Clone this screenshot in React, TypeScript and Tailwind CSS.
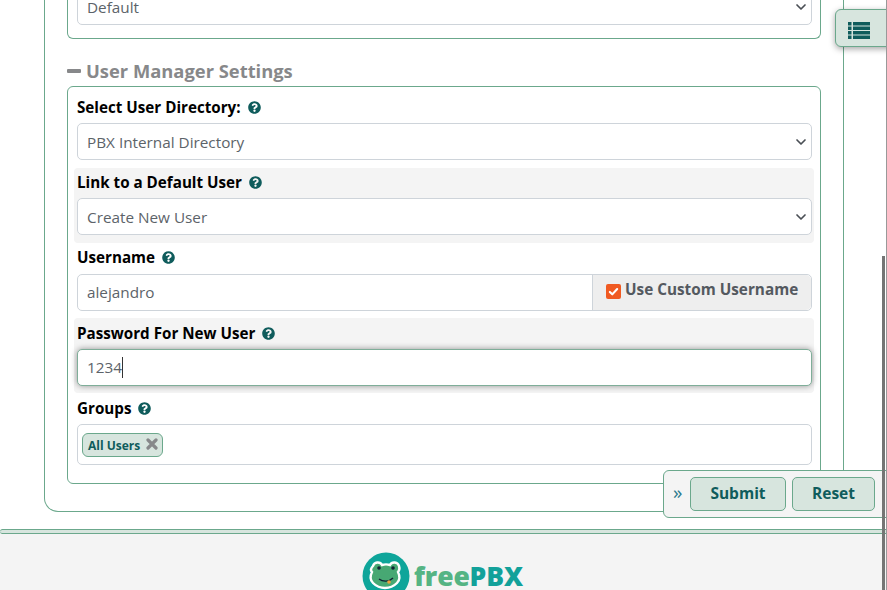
import React from "react";
import { FaQuestionCircle } from "react-icons/fa";

function Help() {
  return <FaQuestionCircle className="ml-[7px] h-[13px] w-[13px] shrink-0 text-[#0f5c5c]" />;
}

function Chevron() {
  return (
    <svg viewBox="0 0 12 12" className="h-[12px] w-[12px]" fill="none" stroke="#4a4f55" strokeWidth="1.7" strokeLinecap="round" strokeLinejoin="round">
      <path d="M2 4l4 4 4-4" />
    </svg>
  );
}

function Label({ text }: { text: string }) {
  return (
    <div className="flex h-[24px] items-center text-[15.2px] font-bold leading-[24px] text-black">
      <span>{text}</span>
      <Help />
    </div>
  );
}

function SelectBox({ value, className = "" }: { value: string; className?: string }) {
  return (
    <div className={`flex h-[37px] items-center justify-between rounded-[5px] border border-[#ced4da] bg-white pl-[9px] pr-[4px] text-[15.3px] text-[#5c6369] ${className}`}>
      <span className="pt-[2px]">{value}</span>
      <Chevron />
    </div>
  );
}

export default function App() {
  return (
    <div className="relative h-[590px] w-[887px] overflow-hidden bg-white font-['Open_Sans',sans-serif]">
      <div className="ml-[44px] mt-[-40px] h-[552px] w-[800px] rounded-b-[14px] border-x border-b border-[#6ba88c] pl-[22px]">
        <div className="h-[79px] w-[754px] rounded-b-[6px] border-x border-b border-[#6ba88c] px-[9px] pt-[28px]">
          <SelectBox value="Default" className="w-[735px]" />
        </div>

        <div className="mt-[19px] flex h-[28px] items-center pb-[2px] text-[18.35px] font-bold text-[#87888a]">
          <span className="mr-[5px] h-[4px] w-[14px] rounded-[1px] bg-[#87888a]" />
          <span>User Manager Settings</span>
        </div>

        <div className="h-[398px] w-[754px] rounded-[6px] border border-[#6ba88c] px-[6px] pt-[8px]">
          <div className="pl-[3px] pr-[2px]">
            <Label text="Select User Directory:" />
            <SelectBox value="PBX Internal Directory" className="mt-[4px]" />
          </div>

          <div className="mt-[8px] h-[75px] rounded-[4px] bg-[#f4f4f4] pl-[3px] pr-[2px] pt-[2px]">
            <Label text="Link to a Default User" />
            <SelectBox value="Create New User" className="mt-[4px]" />
          </div>

          <div className="h-[75px] pl-[3px] pr-[2px] pt-[2px]">
            <Label text="Username" />
            <div className="mt-[5px] flex h-[37px] rounded-[5px] border border-[#ced4da] text-[15.3px]">
              <div className="flex flex-1 items-center pl-[9px] text-[#5c6369]">alejandro</div>
              <div className="flex w-[219px] items-center rounded-r-[5px] border-l border-[#ced4da] bg-[#eeeeee] pl-[13px] text-[15.3px] font-bold text-[#54595f]">
                <span className="mr-[4px] -mt-[3px] flex h-[15px] w-[15px] items-center justify-center rounded-[2px] bg-[#f05a22]">
                  <svg viewBox="0 0 16 16" className="h-[13px] w-[13px]" fill="none" stroke="white" strokeWidth="2.6" strokeLinecap="round" strokeLinejoin="round">
                    <path d="M3.5 8.5l3 3 6-6.5" />
                  </svg>
                </span>
                <span className="-mt-[6px]">Use Custom Username</span>
              </div>
            </div>
          </div>

          <div className="h-[75px] rounded-[4px] bg-[#f4f4f4] pl-[3px] pr-[2px] pt-[3px]">
            <Label text="Password For New User" />
            <div className="mt-[4px] flex h-[37px] items-center rounded-[5px] border border-[#7fae99] bg-white pl-[9px] text-[15.3px] text-[#5c6369] shadow-[0_0_6px_rgba(0,0,0,0.4)]">
              <span>1234</span>
              <span className="h-[21px] w-px bg-[#333]" />
            </div>
          </div>

          <div className="pl-[3px] pr-[2px] pt-[3px]">
            <Label text="Groups" />
            <div className="mt-[4px] flex h-[41px] items-center rounded-[5px] border border-[#ced4da] bg-white pl-[4px]">
              <span className="flex h-[24px] w-[81px] items-center rounded-[6px] border border-[#6ba88c] bg-[#d7e5de] pl-[5px] pt-[2px] text-[12px] font-bold text-[#0f5c5c]">
                All Users
                <svg viewBox="0 0 12 12" className="-mt-[3px] ml-[6px] h-[12px] w-[12px]" stroke="#87888a" strokeWidth="3.2" strokeLinecap="round">
                  <path d="M2 2l8 8M10 2l-8 8" />
                </svg>
              </span>
            </div>
          </div>
        </div>
      </div>

      <div className="mt-[17px] h-[5px] rounded-l-[3px] border-y border-[#6ba88c] bg-[#d7e5de]" />
      <div className="flex h-[57px] justify-center bg-[#f4f4f4] pl-[-2px] pr-[2px] pt-[18px]">
        <div className="flex items-start">
          <svg viewBox="0 0 48 48" className="h-[48px] w-[48px] shrink-0">
            <circle cx="24" cy="24" r="23.5" fill="#0ea59a" />
            <path d="M11 14c1-4 7-5 9-1 3-1 5-1 8 0 2-4 8-3 9 1 1 3 0 5-1 6 2 4 2 8-1 11-3 3-7 5-12 5s-9-2-12-5c-3-3-3-7-1-11-1-1-2-3 1-6z" fill="#47a873" stroke="white" strokeWidth="2.4" />
            <circle cx="17" cy="16" r="1.8" fill="#123" />
            <circle cx="31" cy="16" r="1.8" fill="#123" />
            <path d="M17 27c4 3 10 3 14-1" fill="none" stroke="#123" strokeWidth="1.4" />
            <circle cx="27" cy="30" r="1.8" fill="#f0a03c" />
          </svg>
          <span className="ml-[4px] mt-[6px] text-[26.5px] font-extrabold leading-[36px] tracking-[-0.15px]">
            <span className="text-[#55b484]">free</span>
            <span className="text-[#12a19a]">PBX</span>
          </span>
        </div>
      </div>

      <div className="absolute left-[835px] top-[9px] flex h-[38px] w-[60px] items-start rounded-l-[6px] border border-[#6ba88c] bg-[#d7e5de] pl-[12px] pt-[12px] shadow-[0_2px_6px_rgba(0,0,0,0.35)]">
        <svg viewBox="0 0 22 17" className="h-[17px] w-[22px]" fill="#0f5c5c">
          <rect x="0" y="0" width="3.5" height="3.5" />
          <rect x="5" y="0" width="17" height="3.5" />
          <rect x="0" y="4.5" width="3.5" height="3.5" />
          <rect x="5" y="4.5" width="17" height="3.5" />
          <rect x="0" y="9" width="3.5" height="3.5" />
          <rect x="5" y="9" width="17" height="3.5" />
          <rect x="0" y="13.5" width="3.5" height="3.5" />
          <rect x="5" y="13.5" width="17" height="3.5" />
        </svg>
      </div>

      <div className="absolute left-[663px] top-[470px] flex h-[48px] w-[240px] items-center rounded-l-[6px] border border-[#6ba88c] bg-[#f4f4f4] pl-[9px]">
        <span className="-mt-[3px] w-[17px] text-[19px] leading-none text-[#2b7a8c]">»</span>
        <span className="flex h-[34px] w-[96px] items-center justify-center rounded-[5px] border border-[#6ba88c] bg-[#d7e5de] text-[15.5px] font-bold text-[#0f5c5c]">Submit</span>
        <span className="ml-[6px] flex h-[34px] w-[83px] items-center justify-center rounded-[5px] border border-[#6ba88c] bg-[#d7e5de] text-[15.5px] font-bold text-[#0f5c5c]">Reset</span>
      </div>

      <div className="absolute right-[2px] top-[256px] h-[334px] w-[3px] bg-[#757575]" />
      <div className="absolute right-0 top-0 h-[590px] w-px bg-[#999999]" />
    </div>
  );
}
